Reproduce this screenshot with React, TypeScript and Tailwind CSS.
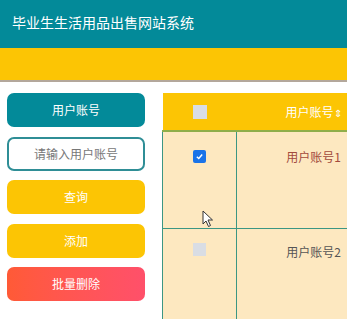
export default function App() {
  return (
    <div className="h-[319px] w-[347px] overflow-hidden bg-white font-['Noto_Sans_CJK_SC','Liberation_Sans',sans-serif]">
      <header className="flex h-[48px] items-center bg-[#038a99] pl-[12px] pb-[3px]">
        <h1 className="text-[14px] text-white">毕业生生活用品出售网站系统</h1>
      </header>
      <div className="h-[32px] bg-[#fcc504]" />
      <div className="h-[2px] bg-[#b3a79b]" />

      <div className="flex pt-[11px]">
        <aside className="ml-[7px] flex w-[138px] shrink-0 flex-col gap-[9.5px]">
          <div className="flex h-[34px] items-center justify-center rounded-[7px] bg-[#038a99] text-[12px] text-white">
            用户账号
          </div>
          <input
            className="h-[34px] rounded-[7px] border-2 border-[#2f8e96] bg-white text-center text-[12px] text-[#666] outline-none placeholder:text-[#777]"
            placeholder="请输入用户账号"
          />
          <button className="h-[34px] rounded-[7px] bg-[#fcc504] text-[12px] text-white">查询</button>
          <button className="h-[34px] rounded-[7px] bg-[#fcc504] text-[12px] text-white">添加</button>
          <button className="h-[34px] rounded-[7px] bg-gradient-to-r from-[#ff5a36] to-[#ff506a] text-[12px] text-white">
            批量删除
          </button>
        </aside>

        <div className="relative ml-[17px] w-[230px] shrink-0">
          <table className="border-collapse text-[12px]">
            <thead>
              <tr className="h-[38px] bg-[#fcc504]">
                <th className="w-[74px] border-b-2 border-[#8fae4a] p-0">
                  <span className="mx-auto block h-[14px] w-[14px] bg-[#d9dde4]" />
                </th>
                <th className="w-[154px] border-b-2 border-[#8fae4a] p-0 font-normal text-white">
                  用户账号<span className="text-[10px]">⇕</span>
                </th>
              </tr>
            </thead>
            <tbody className="bg-[#fde8c0]">
              <tr className="h-[97px] align-top">
                <td className="border border-t-0 border-[#3c9683] pt-[18px]">
                  <span className="mx-auto flex h-[13px] w-[13px] items-center justify-center rounded-[2px] bg-[#1a73e8]">
                    <svg width="9" height="9" viewBox="0 0 10 10">
                      <path d="M2 5.2 L4.2 7.2 L8 2.8" fill="none" stroke="white" strokeWidth="1.6" />
                    </svg>
                  </span>
                </td>
                <td className="border border-t-0 border-[#3c9683] pt-[16px] text-center text-[#a24a3c]">用户账号1</td>
              </tr>
              <tr className="h-[97px] align-top">
                <td className="border border-[#3c9683] pt-[14px]">
                  <span className="mx-auto block h-[13px] w-[13px] bg-[#d9dde4]" />
                </td>
                <td className="border border-[#3c9683] pt-[14px] text-center text-[#555]">用户账号2</td>
              </tr>
            </tbody>
          </table>
          <svg className="absolute left-[40px] top-[117px]" width="12" height="18" viewBox="0 0 12 18">
            <path d="M1 1 L1 14 L4 11 L6.5 16.5 L8.5 15.5 L6 10 L10.5 10 Z" fill="white" stroke="#333" strokeWidth="1" />
          </svg>
        </div>
      </div>
    </div>
  );
}
